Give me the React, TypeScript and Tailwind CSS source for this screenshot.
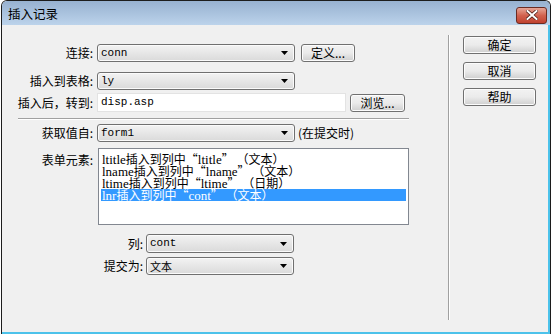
import type { ReactNode } from 'react'

// Win7-style "插入记录" dialog (Dreamweaver insert record)

const cjk = { fontFamily: '"Noto Sans CJK SC", "Noto Sans", sans-serif' }
const mono = { fontFamily: '"Liberation Mono", "Noto Sans CJK SC", monospace' }
const listFont = { fontFamily: '"Liberation Serif", "Noto Sans CJK SC", serif' }

function Arrow() {
  return (
    <svg width="7" height="4" viewBox="0 0 7 4" className="shrink-0">
      <path d="M0 0h7L3.5 4z" fill="#000" />
    </svg>
  )
}

function Combo({ className, children, font = mono }: { className: string; children: ReactNode; font?: React.CSSProperties }) {
  return (
    <div
      className={
        'flex items-center justify-between rounded-[3px] border border-[#707070] bg-linear-to-b from-[#f3f3f3] to-[#dadada] pl-[3px] pr-[6px] text-[11px] leading-none text-black shadow-[inset_0_0_0_1px_#fbfbfb] ' +
        className
      }
      style={font}
    >
      <span>{children}</span>
      <Arrow />
    </div>
  )
}

function Btn({ className, children }: { className: string; children: ReactNode }) {
  return (
    <div
      className={
        'flex items-center justify-center rounded-[3px] border border-[#707070] bg-linear-to-b from-[#f2f2f2] via-[#ebebeb] to-[#cfcfcf] text-[12px] leading-none text-black shadow-[inset_0_0_0_1px_#fcfcfc] ' +
        className
      }
      style={cjk}
    >
      {children}
    </div>
  )
}

const items: [string, string, string][] = [
  ['ltitle', 'ltitle', '文本'],
  ['lname', 'lname', '文本'],
  ['ltime', 'ltime', '日期'],
  ['lnr', 'cont', '文本'],
]

export default function App() {
  return (
    <div className="w-[551px] h-[334px] bg-white overflow-hidden">
      <div className="ml-[1px] w-[550px] h-[334px] flex flex-col border-t border-l border-r border-[#1c1c1c] rounded-t-[6px] overflow-hidden">
        {/* title bar */}
        <div className="h-[24px] shrink-0 flex items-center justify-between bg-linear-to-b from-[#97b1d0] to-[#bcd3eb] pl-[6px] pr-[3px]">
          <span className="text-[12.5px] text-black pt-[3px]" style={cjk}>
            插入记录
          </span>
          <div className="w-[31px] h-[17px] mt-[4px] rounded-[3px] border border-[#6b2b22] bg-linear-to-b from-[#e6a596] via-[#d2624f] to-[#c0412f] flex items-center justify-center">
            <svg width="12" height="10" viewBox="0 0 12 10">
              <path d="M1.5 1l9 8M10.5 1l-9 8" stroke="#4a1a14" strokeWidth="3.4" strokeLinecap="square" />
              <path d="M1.5 1l9 8M10.5 1l-9 8" stroke="#fff" strokeWidth="2" strokeLinecap="square" />
            </svg>
          </div>
        </div>

        {/* client */}
        <div className="flex-1 flex bg-[#f0f0f0] border-b-2 border-r-2 border-[#4cc2ea] text-[12px] text-black" style={cjk}>
          {/* form column */}
          <div className="w-[445px] shrink-0 pt-[19px]">
            <div className="flex items-center h-[18px]">
              <div className="w-[91px] text-right">连接:</div>
              <Combo className="ml-[4px] w-[198px] h-[18px]">conn</Combo>
              <Btn className="ml-[6px] w-[54px] h-[18px]">定义...</Btn>
            </div>
            <div className="flex items-center h-[18px] mt-[10px]">
              <div className="w-[91px] text-right">插入到表格:</div>
              <Combo className="ml-[4px] w-[198px] h-[18px]">ly</Combo>
            </div>
            <div className="flex items-center h-[19px] mt-[3px]">
              <div className="w-[91px] text-right">插入后，转到:</div>
              <div className="ml-[4px] w-[249px] h-[19px] bg-white border border-[#e3e3e3] pl-[3px] flex items-center text-[11px]" style={mono}>
                disp.asp
              </div>
              <Btn className="ml-[4px] w-[55px] h-[18px]">浏览...</Btn>
            </div>
            <div className="ml-[16px] mt-[6px] w-[391px] border-t border-b border-t-[#a0a0a0] border-b-white" />
            <div className="flex items-center h-[18px] mt-[4px]">
              <div className="w-[91px] text-right">获取值自:</div>
              <Combo className="ml-[4px] w-[198px] h-[18px]">form1</Combo>
              <span className="ml-[3px]">(在提交时)</span>
            </div>
            <div className="flex mt-[6px]">
              <div className="w-[91px] text-right pt-[3px]">表单元素:</div>
              <div className="ml-[5px] w-[311px] h-[77px] bg-white border border-[#828790] p-[2px] pt-[4px]" style={listFont}>
                {items.map(([a, b, c], i) => (
                  <div
                    key={a}
                    className={
                      'h-[12px] pl-[1px] text-[13px] leading-[12px] whitespace-nowrap ' +
                      (i === 3 ? 'bg-[#3399ff] text-white' : 'text-black')
                    }
                  >
                    {a}
                    <span style={cjk} className="text-[12px]">
                      插入到列中“
                    </span>
                    {b}
                    <span style={cjk} className="text-[12px]">
                      ” （{c}）
                    </span>
                  </div>
                ))}
              </div>
            </div>
            <div className="flex items-center h-[19px] mt-[9px]">
              <div className="w-[141px] text-right">列:</div>
              <Combo className="ml-[3px] w-[148px] h-[19px]">cont</Combo>
            </div>
            <div className="flex items-center h-[18px] mt-[4px]">
              <div className="w-[141px] text-right">提交为:</div>
              <Combo className="ml-[3px] w-[148px] h-[18px]" font={cjk}>
                文本
              </Combo>
            </div>
          </div>

          {/* separator */}
          <div className="mt-[10px] ml-[1px] h-[285px] w-[2px] border-l border-r border-l-[#a0a0a0] border-r-white" />

          {/* buttons */}
          <div className="ml-[13px] pt-[11px] flex flex-col gap-[8px]">
            <Btn className="w-[73px] h-[18px]">确定</Btn>
            <Btn className="w-[73px] h-[18px]">取消</Btn>
            <Btn className="w-[73px] h-[18px]">帮助</Btn>
          </div>
        </div>
      </div>
    </div>
  )
}
